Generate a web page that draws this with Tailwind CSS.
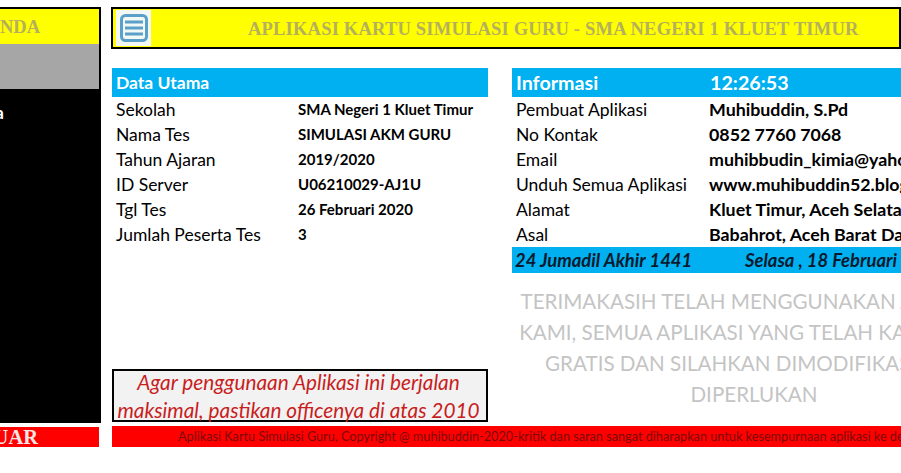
<!DOCTYPE html>
<html lang="id">
<head>
<meta charset="UTF-8">
<title>Aplikasi Kartu Simulasi Guru</title>
<script src="https://cdn.jsdelivr.net/npm/@tailwindcss/browser@4"></script>
</head>
<body class="bg-white">
<div class="w-[901px] h-[473px] overflow-hidden flex font-['Lato',sans-serif] text-black">

  <!-- sidebar -->
  <aside class="w-[101px] shrink-0 pt-[7px] flex flex-col">
    <div class="h-[37px] border-t-2 border-r-2 border-black bg-[#ffff00] flex items-center justify-end pr-[59px] pt-[3px] overflow-hidden whitespace-nowrap font-['Liberation_Serif',serif] font-bold text-[18.5px] text-[#b5b05c]">NDA</div>
    <div class="h-[45px] border-r-2 border-black bg-[#a6a6a6]"></div>
    <div class="h-[334px] bg-black pt-[11px] flex justify-end pr-[97px] whitespace-nowrap text-white font-bold text-[17.5px]">Data</div>
    <div class="mt-[4px] mr-[2px] h-[20px] bg-[#ff0000] flex items-center justify-end pr-[61px] overflow-hidden whitespace-nowrap font-['Liberation_Serif',serif] font-bold text-[20.5px] text-[#f5e6e6]">UAR</div>
  </aside>

  <!-- main -->
  <main class="flex-1 min-w-0 ml-[10px] pt-[7px] flex flex-col">
    <header class="h-[42px] border-2 border-black bg-[#ffff00] flex items-center">
      <div class="ml-[3px] w-[35px] h-[36px] bg-[#f4f8f4] flex items-center justify-center shrink-0">
        <svg width="30" height="30" viewBox="0 0 30 30" fill="none">
          <rect x="2.5" y="2.5" width="25" height="25" rx="4" stroke="#5b9fcb" stroke-width="3"/>
          <path d="M6 9h18M6 15h18M6 21h18" stroke="#5b9fcb" stroke-width="3"/>
        </svg>
      </div>
      <h1 class="ml-[97px] pt-[3px] whitespace-nowrap font-['Liberation_Serif',serif] font-bold text-[18.5px] tracking-[0.2px] text-[#b5b05c]">APLIKASI KARTU SIMULASI GURU - SMA NEGERI 1 KLUET TIMUR</h1>
    </header>

    <div class="flex gap-[24px] mt-[19px] ml-[1px]">
      <!-- data utama -->
      <section class="w-[376px] shrink-0 flex flex-col">
        <div class="h-[29px] bg-[#00b0f0] flex items-center pl-[4px] pt-[2px] text-white font-bold text-[17.5px]">Data Utama</div>
        <dl class="grid grid-cols-[182px_1fr] auto-rows-[25px] items-center pl-[4px] text-[17.5px] [&>dt]:pt-[2px]">
          <dt>Sekolah</dt><dd class="font-bold text-[15px]">SMA Negeri 1 Kluet Timur</dd>
          <dt>Nama Tes</dt><dd class="font-bold text-[15px]">SIMULASI AKM GURU</dd>
          <dt>Tahun Ajaran</dt><dd class="font-bold text-[15px]">2019/2020</dd>
          <dt>ID Server</dt><dd class="font-bold text-[15px]">U06210029-AJ1U</dd>
          <dt>Tgl Tes</dt><dd class="font-bold text-[15px]">26 Februari 2020</dd>
          <dt>Jumlah Peserta Tes</dt><dd class="font-bold text-[15px]">3</dd>
        </dl>
        <div class="mt-[122px] h-[53px] border-2 border-black bg-[#f2f2f2] flex flex-col items-center justify-center pr-[3px] pt-[1px] text-[#c81e1e] italic text-[20.8px] leading-[28px] whitespace-nowrap">
          <p>Agar penggunaan Aplikasi ini berjalan</p>
          <p>maksimal, pastikan officenya di atas 2010</p>
        </div>
      </section>

      <!-- informasi -->
      <section class="w-[484px] shrink-0 flex flex-col">
        <div class="h-[29px] bg-[#00b0f0] grid grid-cols-[194px_1fr] items-center pl-[4px] text-white font-bold text-[19.7px]">
          <span>Informasi</span><span>12:26:53</span>
        </div>
        <dl class="grid grid-cols-[193px_1fr] auto-rows-[25px] items-center pl-[4px] text-[17.5px] whitespace-nowrap [&>dt]:pt-[2px]">
          <dt>Pembuat Aplikasi</dt><dd class="font-bold text-[17.8px]">Muhibuddin, S.Pd</dd>
          <dt>No Kontak</dt><dd class="font-bold text-[17.8px]">0852 7760 7068</dd>
          <dt>Email</dt><dd class="font-bold text-[17.8px]">muhibbudin_kimia@yahoo.com</dd>
          <dt>Unduh Semua Aplikasi</dt><dd class="font-bold text-[17.8px]">www.muhibuddin52.blogspot.com</dd>
          <dt>Alamat</dt><dd class="font-bold text-[17.8px]">Kluet Timur, Aceh Selatan</dd>
          <dt>Asal</dt><dd class="font-bold text-[17.8px]">Babahrot, Aceh Barat Daya</dd>
        </dl>
        <div class="h-[26px] bg-[#00b0f0] flex items-center pl-[3px] pt-[1px] font-bold italic text-[18.4px] text-[#0a1a2e] whitespace-nowrap">
          <span class="w-[230px]">24 Jumadil Akhir 1441</span><span>Selasa , 18 Februari 2020</span>
        </div>
        <div class="mt-[13px] text-center text-[20.6px] leading-[31px] text-[#c4c4c4] whitespace-nowrap">
          <p>TERIMAKASIH TELAH MENGGUNAKAN APLIKASI</p>
          <p>KAMI, SEMUA APLIKASI YANG TELAH KAMI BUAT</p>
          <p>GRATIS DAN SILAHKAN DIMODIFIKASI JIKA</p>
          <p>DIPERLUKAN</p>
        </div>
      </section>
    </div>

    <footer class="mt-[4px] ml-[1px] h-[21px] bg-[#ff0000] flex items-center pl-[66px] text-[12.7px] text-[#7a0a0a] whitespace-nowrap overflow-hidden">Aplikasi Kartu Simulasi Guru, Copyright @ muhibuddin-2020-kritik dan saran sangat diharapkan untuk kesempurnaan aplikasi ke depan</footer>
  </main>
</div>
</body>
</html>
